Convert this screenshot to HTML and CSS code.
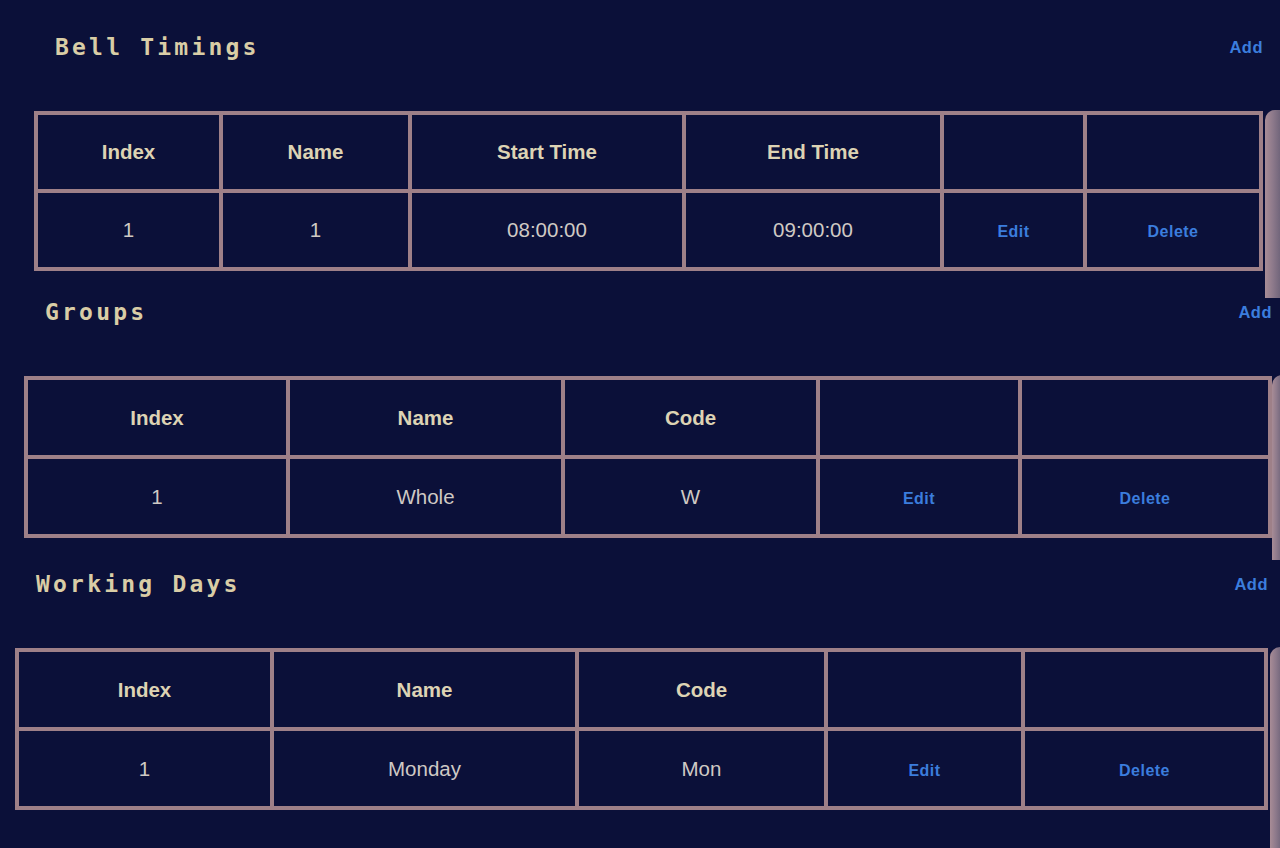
FILE: index.html
```html
<!DOCTYPE html>
<html>
<head>
<meta charset="utf-8">
<title>Settings</title>
<link rel="stylesheet" href="styles.css">
</head>
<body>
<div class="page">
  <section class="sec sec-bell">
    <div class="sec-head">
      <h2 class="sec-title">Bell Timings</h2>
      <a class="link add">Add</a>
    </div>
    <div class="table-wrap">
      <table class="grid grid-bell">
        <thead>
          <tr><th>Index</th><th>Name</th><th>Start Time</th><th>End Time</th><th></th><th></th></tr>
        </thead>
        <tbody>
          <tr><td>1</td><td>1</td><td>08:00:00</td><td>09:00:00</td><td><a class="link">Edit</a></td><td><a class="link">Delete</a></td></tr>
        </tbody>
      </table>
    </div>
  </section>

  <section class="sec sec-groups">
    <div class="sec-head">
      <h2 class="sec-title">Groups</h2>
      <a class="link add">Add</a>
    </div>
    <div class="table-wrap">
      <table class="grid grid-groups">
        <thead>
          <tr><th>Index</th><th>Name</th><th>Code</th><th></th><th></th></tr>
        </thead>
        <tbody>
          <tr><td>1</td><td>Whole</td><td>W</td><td><a class="link">Edit</a></td><td><a class="link">Delete</a></td></tr>
        </tbody>
      </table>
    </div>
  </section>

  <section class="sec sec-days">
    <div class="sec-head">
      <h2 class="sec-title">Working Days</h2>
      <a class="link add">Add</a>
    </div>
    <div class="table-wrap">
      <table class="grid grid-days">
        <thead>
          <tr><th>Index</th><th>Name</th><th>Code</th><th></th><th></th></tr>
        </thead>
        <tbody>
          <tr><td>1</td><td>Monday</td><td>Mon</td><td><a class="link">Edit</a></td><td><a class="link">Delete</a></td></tr>
        </tbody>
      </table>
    </div>
  </section>
</div>
</body>
</html>
```

FILE: styles.css
```css
* { box-sizing: border-box; }

html, body {
  margin: 0;
  padding: 0;
  background: #0b1039;
  height: 100%;
  overflow: hidden;
}

body {
  font-family: "Liberation Sans", Arial, sans-serif;
  color: #d2cbc2;
}

.page {
  display: flex;
  flex-direction: column;
}

.sec-head {
  display: flex;
  justify-content: space-between;
  align-items: center;
  height: 30px;
  margin-bottom: 49px;
  padding-left: 21px;
}

.sec-title {
  margin: 0;
  font-family: "DejaVu Sans Mono", "Liberation Mono", monospace;
  font-weight: bold;
  font-size: 23px;
  letter-spacing: 3.2px;
  color: #d9cda6;
}

.link {
  font-family: "Liberation Sans", Arial, sans-serif;
  font-weight: bold;
  font-size: 16px;
  letter-spacing: 0.5px;
  color: #3b7ddd;
  cursor: pointer;
}

.add { font-size: 16.5px; }

.sec-bell { margin: 32px 0 0 34px; width: 1229px; }
.sec-groups { margin: 26px 0 0 24px; width: 1248px; }
.sec-days { margin: 31px 0 0 15px; width: 1253px; }

.table-wrap {
  position: relative;
}

/* decorative side rail next to each table */
.table-wrap::after {
  content: "";
  position: absolute;
  top: -1px;
  left: calc(100% + 2px);
  width: 16px;
  border-top-left-radius: 10px;
  background: linear-gradient(90deg, #a88c96 0%, #8f7b8c 45%, #6e6379 100%);
}
.sec-bell .table-wrap::after { height: 188px; }
.sec-groups .table-wrap::after { height: 185px; left: 100%; width: 10px; }
.sec-days .table-wrap::after { height: 220px; width: 12px; }

.grid {
  width: 100%;
  table-layout: fixed;
  border-collapse: collapse;
  border: 4px solid #9e8088;
}

.grid th, .grid td {
  border: 4px solid #9e8088;
  height: 78px;
  padding: 0;
  text-align: center;
  vertical-align: middle;
  font-size: 20.5px;
}

.grid th {
  font-weight: bold;
  color: #ddd3b4;
}

.grid td {
  font-weight: normal;
  color: #cfc9c4;
}

.grid-bell th:nth-child(1) { width: 185px; }
.grid-bell th:nth-child(2) { width: 189px; }
.grid-bell th:nth-child(3) { width: 274px; }
.grid-bell th:nth-child(4) { width: 258px; }
.grid-bell th:nth-child(5) { width: 143px; }

.grid-groups th:nth-child(1) { width: 262px; }
.grid-groups th:nth-child(2) { width: 275px; }
.grid-groups th:nth-child(3) { width: 255px; }
.grid-groups th:nth-child(4) { width: 202px; }

.grid-groups td, .grid-groups th { height: 79px; }
.grid-days td, .grid-days th { height: 79px; }

.grid-days th:nth-child(1) { width: 255px; }
.grid-days th:nth-child(2) { width: 305px; }
.grid-days th:nth-child(3) { width: 249px; }
.grid-days th:nth-child(4) { width: 197px; }
```
